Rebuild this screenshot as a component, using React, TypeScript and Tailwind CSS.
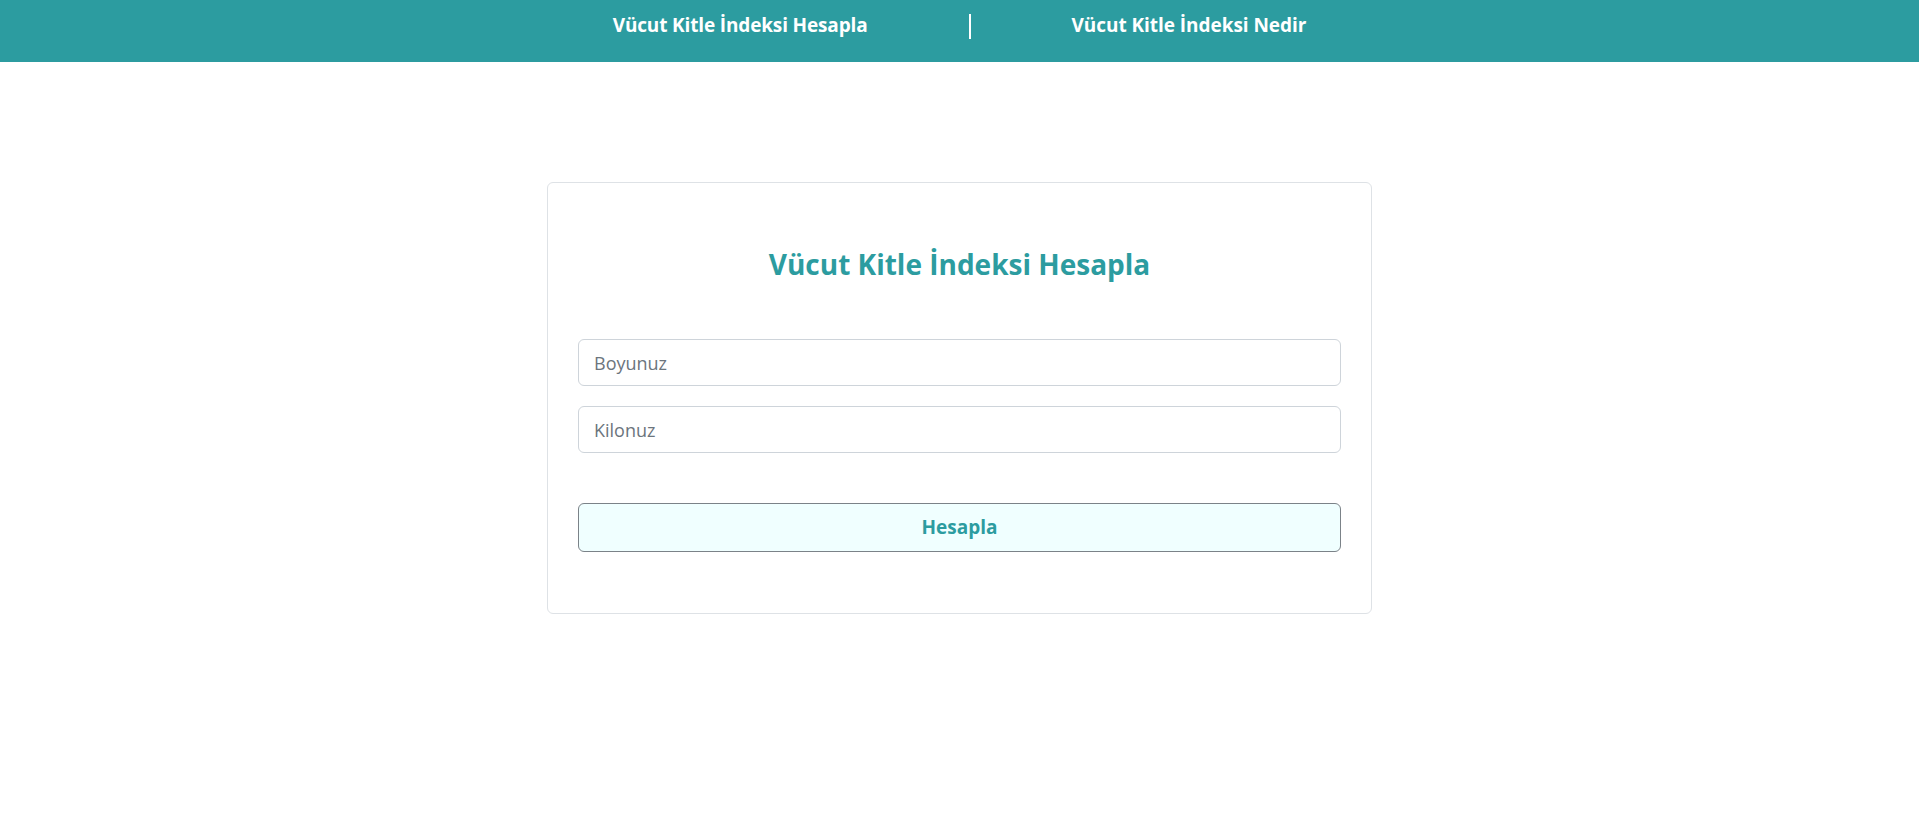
import { useState } from "react";

const font = { fontFamily: '"Open Sans", "Noto Sans", sans-serif' };

export default function App() {
  const [boy, setBoy] = useState("");
  const [kilo, setKilo] = useState("");

  return (
    <main className="min-h-screen bg-white" style={font}>
      {/* üst menü */}
      <header className="h-[62px] bg-[#2c9ca0]">
        <nav className="flex h-full items-start justify-center pt-[10px]">
          <a href="#" className="text-[19px] font-bold leading-[30px] text-white tracking-[-0.15px]">
            Vücut Kitle İndeksi Hesapla
          </a>
          <span className="mx-[101px] mt-[4px] h-[25px] w-[2px] bg-white" />
          <a href="#" className="text-[19px] font-bold leading-[30px] text-white tracking-[-0.05px]">
            Vücut Kitle İndeksi Nedir
          </a>
        </nav>
      </header>

      <div className="flex justify-center pt-[120px]">
        <div className="w-[825px] rounded-[6px] border border-[#dee2e6] bg-white px-[30px] pt-[64px] pb-[61px]">
          <h3 className="text-center text-[28px] font-bold leading-[34px] text-[#2c9ca0] tracking-[0px]">
            Vücut Kitle İndeksi Hesapla
          </h3>

          <div className="mt-[58px] flex flex-col gap-[20px]">
            <input
              value={boy}
              onChange={(e) => setBoy(e.target.value)}
              placeholder="Boyunuz"
              className="h-[47px] w-full rounded-[6px] border border-[#ced4da] px-[15px] text-[18px] text-[#212529] outline-none placeholder:text-[#6c757d]"
            />
            <input
              value={kilo}
              onChange={(e) => setKilo(e.target.value)}
              placeholder="Kilonuz"
              className="h-[47px] w-full rounded-[6px] border border-[#ced4da] px-[15px] text-[18px] text-[#212529] outline-none placeholder:text-[#6c757d]"
            />
          </div>

          <button className="mt-[50px] h-[49px] w-full rounded-[6px] border border-[#7b8288] bg-[#f0ffff] text-[19px] font-bold text-[#2c9ca0]">
            Hesapla
          </button>
        </div>
      </div>
    </main>
  );
}
